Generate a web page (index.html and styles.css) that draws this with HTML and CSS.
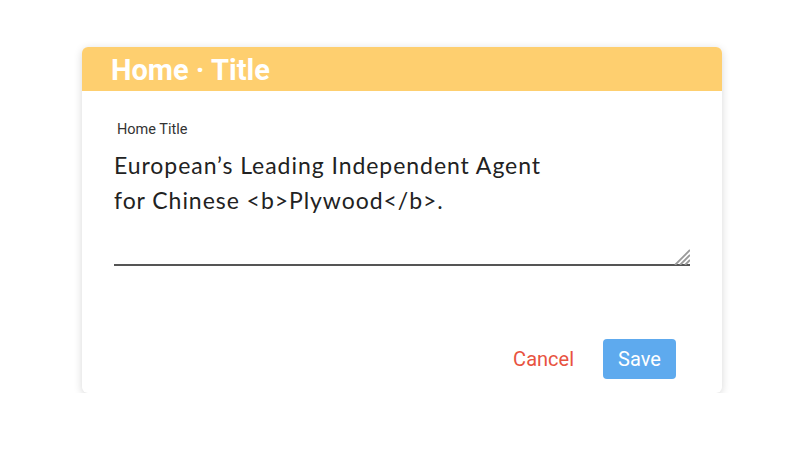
FILE: index.html
```html
<!DOCTYPE html>
<html>
<head>
<meta charset="utf-8">
<link rel="stylesheet" href="styles.css">
</head>
<body>
<div class="card">
  <div class="card-header">Home · Title</div>
  <div class="card-body">
    <label class="field-label" for="ht">Home Title</label>
    <div class="field-wrap">
      <textarea id="ht" class="field-input">European’s Leading Independent Agent
for Chinese &lt;b&gt;Plywood&lt;/b&gt;.</textarea>
      <svg class="grip" width="17" height="17" viewBox="0 0 17 17">
        <path d="M17 2 L2 17 M17 7 L7 17 M17 12 L12 17" stroke="#9a9a9a" stroke-width="1.8" fill="none"/>
      </svg>
    </div>
  </div>
  <div class="card-footer">
    <button class="btn btn-cancel">Cancel</button>
    <button class="btn btn-save">Save</button>
  </div>
</div>
</body>
</html>
```
FILE: styles.css
```css
html, body {
  margin: 0;
  background: #ffffff;
}
body {
  padding: 47px 0 0 82px;
  font-family: Roboto, "Liberation Sans", sans-serif;
}
.card {
  width: 640px;
  background: #fff;
  border-radius: 6px;
  box-shadow: 0 2px 8px rgba(0,0,0,0.16);
  overflow: hidden;
}
.card-header {
  height: 44px;
  background: #fecf6f;
  color: #fff;
  font-weight: 700;
  font-size: 29px;
  line-height: 47px;
  padding-left: 29px;
}
.card-body {
  padding: 31px 32px 0 32px;
  display: flex;
  flex-direction: column;
}
.field-label {
  font-size: 14.5px;
  line-height: 16px;
  color: #333;
  padding-left: 3px;
}
.field-wrap {
  position: relative;
  margin-top: 10px;
  width: 576px;
  height: 118px;
}
.field-input {
  display: block;
  box-sizing: border-box;
  width: 576px;
  height: 118px;
  border: none;
  border-bottom: 2px solid #555;
  padding: 0;
  outline: none;
  resize: none;
  font-family: Lato, "Open Sans", sans-serif;
  font-size: 23px;
  line-height: 35px;
  color: #222;
  letter-spacing: 0.95px;
  background: transparent;
}
.grip {
  position: absolute;
  right: 0;
  bottom: 1px;
}
.card-footer {
  display: flex;
  justify-content: flex-end;
  align-items: center;
  padding: 73px 46px 14px 0;
}
.btn {
  font-family: Roboto, "Liberation Sans", sans-serif;
  font-size: 20px;
  height: 40px;
  border: none;
  border-radius: 4px;
  background: transparent;
  cursor: pointer;
}
.btn-cancel {
  color: #e8533f;
  padding: 0 14px;
  margin-right: 15px;
}
.btn-save {
  background: #5eaaee;
  color: #fff;
  padding: 0 15px;
  width: 73px;
}
```
